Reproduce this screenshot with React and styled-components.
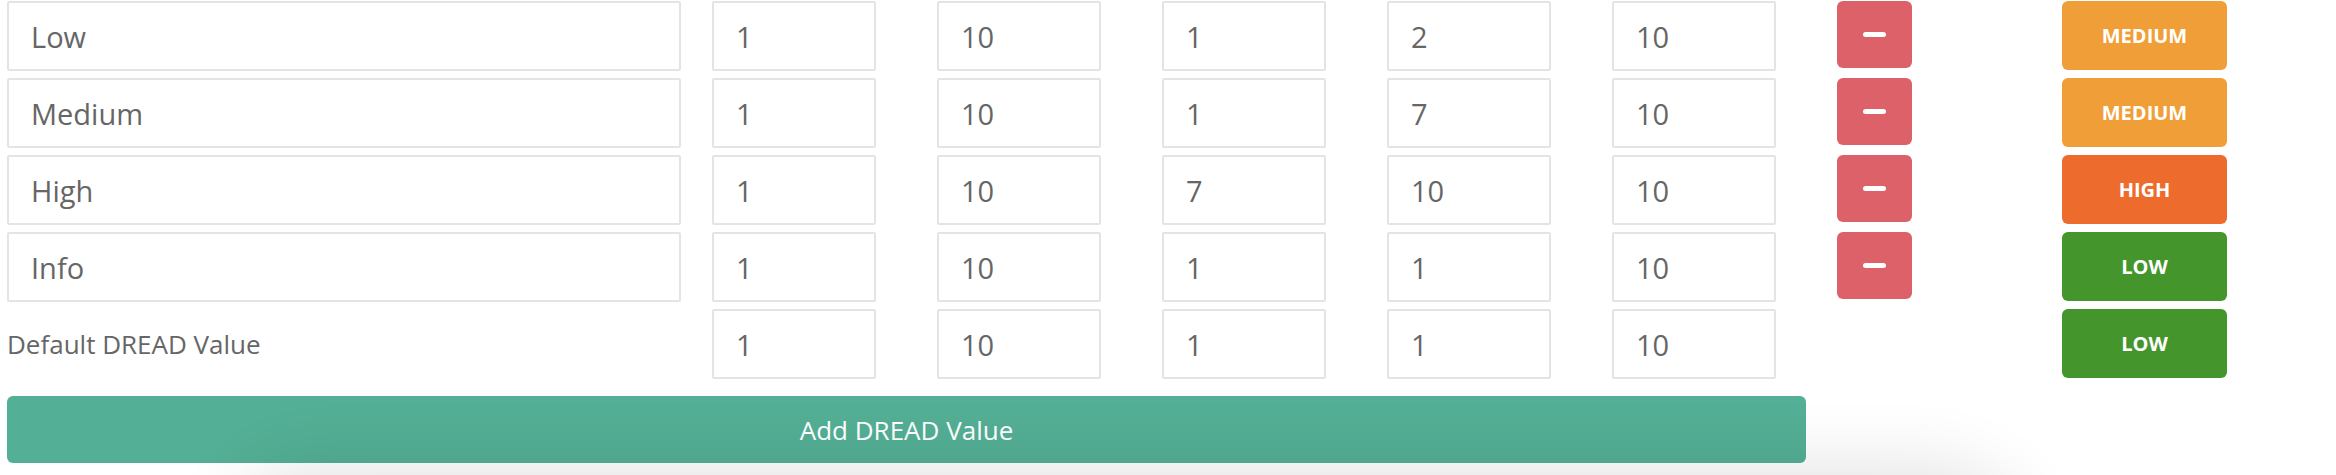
import React from "react";
import styled, { createGlobalStyle } from "styled-components";

const GlobalStyle = createGlobalStyle`
  html, body {
    margin: 0;
    padding: 0;
    background: #ffffff;
    overflow: hidden;
  }
  body {
    font-family: "Open Sans", "Noto Sans", sans-serif;
  }
`;

const Page = styled.div`
  position: relative;
  padding: 1px 0 0 7px;
  min-height: 475px;
  box-sizing: border-box;
`;

const Rows = styled.div`
  display: flex;
  flex-direction: column;
  gap: 7px;
`;

const Row = styled.div`
  display: grid;
  grid-template-columns: 705px repeat(6, 225px) 165px;
  align-items: start;
`;

const Field = styled.input`
  box-sizing: border-box;
  width: ${(p) => (p.$wide ? "674px" : "164px")};
  height: 70px;
  margin: 0;
  padding: 0 22px;
  border: 2px solid #e4e4e4;
  border-radius: 2px;
  background: #fff;
  color: #666666;
  font-family: "Open Sans", "Noto Sans", sans-serif;
  font-size: 29px;
  outline: none;
`;

const RowLabel = styled.div`
  height: 70px;
  display: flex;
  align-items: center;
  color: #666666;
  font-size: 26px;
`;

const DeleteButton = styled.button`
  box-sizing: border-box;
  width: 75px;
  height: 67px;
  margin: 0;
  padding: 0;
  border: none;
  border-radius: 6px;
  background: #dc6169;
  display: flex;
  align-items: center;
  justify-content: center;
  cursor: pointer;
`;

const MinusBar = styled.span`
  display: block;
  width: 23px;
  height: 5px;
  border-radius: 3px;
  background: #ffffff;
`;

const levelColors = {
  MEDIUM: "#f09f38",
  HIGH: "#ee6b2e",
  LOW: "#44962c",
};

const Badge = styled.div`
  box-sizing: border-box;
  width: 165px;
  height: 69px;
  border-radius: 6px;
  background: ${(p) => levelColors[p.$level]};
  color: #ffffff;
  font-size: 20px;
  font-weight: 700;
  display: flex;
  align-items: center;
  justify-content: center;
`;

const AddButton = styled.button`
  box-sizing: border-box;
  width: 1799px;
  height: 67px;
  margin: 17px 0 0 0;
  padding: 0;
  border: none;
  border-radius: 6px;
  background: #53af95;
  color: #ffffff;
  font-family: "Open Sans", "Noto Sans", sans-serif;
  font-size: 26px;
  cursor: pointer;
`;

const FloatingPanel = styled.div`
  position: absolute;
  left: 260px;
  top: 505px;
  width: 1730px;
  height: 200px;
  border-radius: 60px;
  background: #e8e8e8;
  box-shadow: 0 0 70px 40px rgba(0, 0, 0, 0.11);
  pointer-events: none;
`;

const rows = [
  { name: "Low", values: [1, 10, 1, 2, 10], level: "MEDIUM" },
  { name: "Medium", values: [1, 10, 1, 7, 10], level: "MEDIUM" },
  { name: "High", values: [1, 10, 7, 10, 10], level: "HIGH" },
  { name: "Info", values: [1, 10, 1, 1, 10], level: "LOW" },
];

export default function App() {
  return (
    <>
      <GlobalStyle />
      <Page>
        <Rows>
          {rows.map((r) => (
            <Row key={r.name}>
              <Field $wide readOnly value={r.name} />
              {r.values.map((v, i) => (
                <Field key={i} readOnly value={v} />
              ))}
              <DeleteButton aria-label="Remove">
                <MinusBar />
              </DeleteButton>
              <Badge $level={r.level}>{r.level}</Badge>
            </Row>
          ))}
          <Row>
            <RowLabel>Default DREAD Value</RowLabel>
            {[1, 10, 1, 1, 10].map((v, i) => (
              <Field key={i} readOnly value={v} />
            ))}
            <div />
            <Badge $level="LOW">LOW</Badge>
          </Row>
        </Rows>
        <AddButton>Add DREAD Value</AddButton>
        <FloatingPanel />
      </Page>
    </>
  );
}
